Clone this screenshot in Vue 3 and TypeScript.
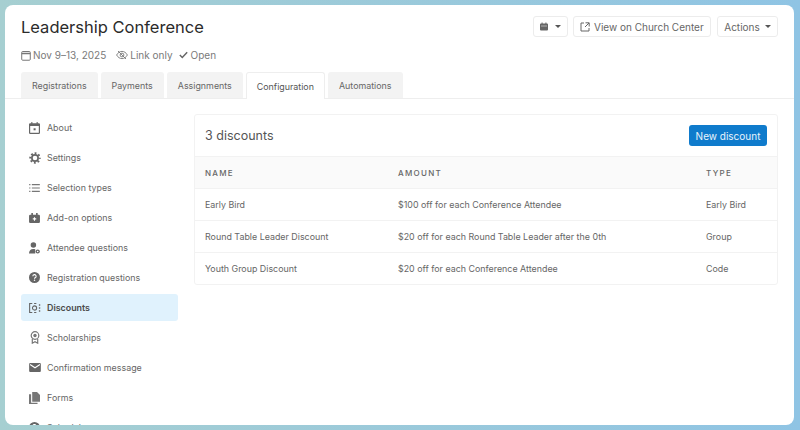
<script setup lang="ts">
interface NavItem {
  label: string
  icon: string
  active?: boolean
}

interface Discount {
  name: string
  amount: string
  type: string
}

const tabs = ['Registrations', 'Payments', 'Assignments', 'Configuration', 'Automations']

const navItems: NavItem[] = [
  { label: 'About', icon: 'about' },
  { label: 'Settings', icon: 'settings' },
  { label: 'Selection types', icon: 'list' },
  { label: 'Add-on options', icon: 'addon' },
  { label: 'Attendee questions', icon: 'attendee' },
  { label: 'Registration questions', icon: 'question' },
  { label: 'Discounts', icon: 'discount', active: true },
  { label: 'Scholarships', icon: 'award' },
  { label: 'Confirmation message', icon: 'mail' },
  { label: 'Forms', icon: 'forms' },
  { label: 'Schedule', icon: 'question' },
]

const discounts: Discount[] = [
  { name: 'Early Bird', amount: '$100 off for each Conference Attendee', type: 'Early Bird' },
  { name: 'Round Table Leader Discount', amount: '$20 off for each Round Table Leader after the 0th', type: 'Group' },
  { name: 'Youth Group Discount', amount: '$20 off for each Conference Attendee', type: 'Code' },
]
</script>

<template>
  <div class="frame">
    <div class="panel">
      <header class="head">
        <div class="head__left">
          <h1 class="title">Leadership Conference</h1>
          <div class="meta">
            <span class="meta__item">
              <svg width="10" height="11" viewBox="0 0 11 12" fill="none" stroke="#777" stroke-width="1.100">
                <rect x="0.800" y="1.600" width="9.400" height="9.600" rx="1" />
                <path d="M0.800 3.800h9.400" stroke-width="1.500" />
              </svg>
              Nov 9–13, 2025
            </span>
            <span class="meta__item meta__item--eye">
              <svg width="12" height="10" viewBox="0 0 12 10" fill="none" stroke="#777" stroke-width="0.900">
                <path d="M0.600 5C2 2.600 3.800 1.400 6 1.400S10 2.600 11.400 5C10 7.400 8.200 8.600 6 8.600S2 7.400 0.600 5Z" />
                <circle cx="6" cy="5" r="1.900" />
                <path d="M2 1l8 8" />
              </svg>
              Link only
            </span>
            <span class="meta__item meta__item--check">
              <svg width="9" height="8" viewBox="0 0 11 9" fill="none" stroke="#666" stroke-width="1.800">
                <path d="M1 4.600l3 3 6-6.400" />
              </svg>
              Open
            </span>
          </div>
        </div>
        <div class="head__actions">
          <button class="btn btn--icon">
            <svg width="8" height="9" viewBox="0 0 10 10" fill="#666">
              <path d="M2 0h1.200v1.200h3.600V0H8v1.200h.8A1.200 1.200 0 0 1 10 2.400v6.400A1.200 1.200 0 0 1 8.800 10H1.200A1.200 1.200 0 0 1 0 8.800V2.400A1.200 1.200 0 0 1 1.200 1.200H2Z" />
              <path d="M1.200 4h7.600v.7H1.200z" fill="#fff" />
            </svg>
            <span class="caret"></span>
          </button>
          <button class="btn btn--wide">
            <svg width="10" height="10" viewBox="0 0 10 10" fill="none" stroke="#666" stroke-width="1">
              <path d="M4 1H1v8h8V6" />
              <path d="M5.500 .8h3.700v3.700M9 1L5 5" />
            </svg>
            View on Church Center
          </button>
          <button class="btn btn--actions">
            Actions
            <span class="caret"></span>
          </button>
        </div>
      </header>

      <nav class="tabs">
        <a v-for="tab in tabs" :key="tab" class="tab" :class="{ 'tab--active': tab === 'Configuration' }">{{ tab }}</a>
      </nav>

      <div class="body">
        <aside class="side">
          <a v-for="item in navItems" :key="item.label" class="side__item" :class="{ 'side__item--active': item.active }">
            <span class="side__icon">
              <svg v-if="item.icon === 'about'" width="11" height="12" viewBox="0 0 12 13" fill="#666">
                <path d="M2.500 0h1.200v1.200h4.600V0h1.200v1.200h1.200A1.300 1.300 0 0 1 12 2.500v9.200a1.300 1.300 0 0 1-1.300 1.300H1.300A1.300 1.300 0 0 1 0 11.700V2.500a1.300 1.300 0 0 1 1.300-1.300h1.200Z" />
                <rect x="1.300" y="4.300" width="9.400" height="7.400" fill="#fff" />
                <rect x="5" y="6.800" width="2.200" height="2.200" />
              </svg>
              <svg v-else-if="item.icon === 'settings'" width="12" height="12" viewBox="0 0 13 13" fill="none" stroke="#666">
                <circle cx="6.500" cy="6.500" r="3.400" stroke-width="1.800" />
                <circle cx="6.500" cy="6.500" r="5.200" stroke-width="2" stroke-dasharray="2 2.080" stroke-dashoffset="1" />
              </svg>
              <svg v-else-if="item.icon === 'list'" width="11" height="8" viewBox="0 0 12 9" fill="#777">
                <path d="M0 0h1.400v1.400H0zM0 3.800h1.400v1.400H0zM0 7.600h1.400V9H0zM3 0h9v1.400H3zM3 3.800h9v1.400H3zM3 7.600h9V9H3z" />
              </svg>
              <svg v-else-if="item.icon === 'addon'" width="11" height="10" viewBox="0 0 12 11" fill="#666">
                <path d="M2.500 0h1.800v2h3.400V0h1.800v2h1.200A1.300 1.300 0 0 1 12 3.300v6.400A1.300 1.300 0 0 1 10.700 11H1.300A1.300 1.300 0 0 1 0 9.700V3.300A1.300 1.300 0 0 1 1.300 2h1.200Z" />
                <path d="M5.400 4.600h1.200v1.300h1.300v1.200H6.600v1.300H5.400V7.100H4.100V5.900h1.300z" fill="#fff" />
              </svg>
              <svg v-else-if="item.icon === 'attendee'" width="11" height="12" viewBox="0 0 12 13" fill="#666">
                <circle cx="4.800" cy="3.300" r="3" />
                <path d="M0 12.500c0-3 1.600-5 4.800-5 .8 0 1.500.1 2 .4v4.600Z" />
                <circle cx="9.500" cy="10.300" r="2.300" />
                <circle cx="9.500" cy="10.300" r=".9" fill="#fff" />
              </svg>
              <svg v-else-if="item.icon === 'question'" width="11" height="11" viewBox="0 0 12 12">
                <circle cx="6" cy="6" r="6" fill="#666" />
                <path d="M4.200 4.700A1.800 1.800 0 1 1 6.700 6.300C6.200 6.600 6 6.800 6 7.300" fill="none" stroke="#fff" stroke-width="1.200" />
                <circle cx="6" cy="9" r=".8" fill="#fff" />
              </svg>
              <svg v-else-if="item.icon === 'discount'" width="12" height="10" viewBox="0 0 13 11" fill="none" stroke="#666" stroke-width="1.200">
                <path d="M3.500 .6H.6v9.800h2.900" />
                <path d="M5.500 .6h2.500M5.500 10.400h2.500" />
                <circle cx="6" cy="5.500" r="2.300" />
                <path d="M11.500 1.500v1.500M11.500 4.800v1.500M11.500 8v1.500" stroke-width="1.500" />
              </svg>
              <svg v-else-if="item.icon === 'award'" width="10" height="13" viewBox="0 0 10 13" fill="none" stroke="#777">
                <circle cx="5" cy="4.500" r="3.800" stroke-width="1.200" />
                <circle cx="5" cy="4.500" r="1.700" fill="#777" stroke="none" />
                <path d="M2.300 8v4.200L5 10.800l2.700 1.400V8" stroke-width="1.200" />
              </svg>
              <svg v-else-if="item.icon === 'mail'" width="12" height="9" viewBox="0 0 13 10" fill="#666">
                <rect width="13" height="10" rx="1.200" />
                <path d="M1 1.700l5.500 3.600L12 1.700" fill="none" stroke="#fff" stroke-width="1.200" />
              </svg>
              <svg v-else width="11" height="12" viewBox="0 0 12 13" fill="#777">
                <path d="M3.500 0h5.200L12 3.300V10.500H3.500Z" />
                <path d="M0 2.500h2.300v9.200h7V13H0Z" />
              </svg>
            </span>
            {{ item.label }}
          </a>
        </aside>

        <section class="card">
          <div class="card__head">
            <h2 class="card__title">3 discounts</h2>
            <button class="primary">New discount</button>
          </div>
          <table class="table">
            <thead>
              <tr>
                <th class="col-name">Name</th>
                <th class="col-amount">Amount</th>
                <th>Type</th>
              </tr>
            </thead>
            <tbody>
              <tr v-for="row in discounts" :key="row.name">
                <td>{{ row.name }}</td>
                <td>{{ row.amount }}</td>
                <td>{{ row.type }}</td>
              </tr>
            </tbody>
          </table>
        </section>
      </div>
    </div>
  </div>
</template>

<style>
html,
body {
  margin: 0;
  background: #9cc9d9;
}
</style>

<style scoped>
* {
  box-sizing: border-box;
}

.frame {
  width: 800px;
  height: 430px;
  padding: 5px 6px 5px 5px;
  background: linear-gradient(90deg, #a6cfd1 0%, #8fc4e4 100%);
  font-family: Inter, 'Liberation Sans', sans-serif;
  color: #444;
}

.panel {
  height: 100%;
  background: #fff;
  border-radius: 8px;
  overflow: hidden;
}

.head {
  display: flex;
  justify-content: space-between;
  align-items: flex-start;
  padding: 11px 16px 0;
  height: 67px;
}

.title {
  margin: 0;
  font-size: 16.5px;
  line-height: 22px;
  font-weight: 400;
  color: #2b2b2b;
}

.meta {
  display: flex;
  gap: 8px;
  margin-top: 10px;
  font-size: 10px;
  line-height: 14px;
  color: #7a7a7a;
}

.meta__item {
  display: flex;
  align-items: center;
  gap: 2px;
}

.meta__item--eye {
  margin-left: 2px;
}

.meta__item--check {
  gap: 3px;
  margin-left: -2px;
}

.head__actions {
  display: flex;
  gap: 5px;
}

.btn {
  display: flex;
  align-items: center;
  gap: 4px;
  height: 21px;
  padding: 0 6px;
  border: 1px solid #ececec;
  border-radius: 3px;
  background: #fff;
  font: inherit;
  font-size: 10px;
  color: #666;
}

.btn--icon {
  width: 35px;
  gap: 7px;
  justify-content: center;
}

.btn--wide {
  width: 138px;
}

.btn--actions {
  width: 61px;
  margin-left: 1px;
  gap: 5px;
  justify-content: center;
}

.caret {
  width: 0;
  height: 0;
  border-left: 3px solid transparent;
  border-right: 3px solid transparent;
  border-top: 3px solid #555;
}

.tabs {
  display: flex;
  gap: 3px;
  padding-left: 16px;
  height: 27px;
  border-bottom: 1px solid #eee;
}

.tab {
  display: flex;
  align-items: center;
  padding: 0 11px;
  height: 26px;
  background: #f3f3f3;
  border-radius: 3px 3px 0 0;
  font-size: 8.9px;
  color: #666;
}

.tab--active {
  height: 27px;
  padding: 0 10px;
  background: #fff;
  border: 1px solid #eee;
  border-bottom: 0;
  color: #555;
}

.body {
  display: flex;
  gap: 16px;
  padding: 15px 16px 0;
}

.side {
  display: flex;
  flex-direction: column;
  gap: 3px;
  flex: 0 0 157px;
}

.side__item {
  display: flex;
  align-items: center;
  flex: 0 0 27px;
  padding-left: 7px;
  border-radius: 3px;
  font-size: 8.9px;
  color: #666;
}

.side__item--active {
  background: #e0f2fd;
  font-weight: 600;
  color: #4a4a4a;
}

.side__icon {
  display: flex;
  justify-content: center;
  align-items: center;
  width: 13px;
  margin-right: 6px;
}

.card {
  flex: 1;
  height: 171px;
  border: 1px solid #f2f2f2;
  border-radius: 3px;
  overflow: hidden;
}

.card__head {
  display: flex;
  justify-content: space-between;
  align-items: center;
  height: 41px;
  padding: 0 10px;
}

.card__title {
  margin: 0;
  font-size: 12.5px;
  font-weight: 400;
  color: #555;
}

.primary {
  width: 78px;
  height: 21px;
  padding: 0;
  border: 0;
  border-radius: 3px;
  background: #0f7bcc;
  font: inherit;
  font-size: 10px;
  color: #e8f4fc;
}

.table {
  width: 100%;
  border-collapse: collapse;
  table-layout: fixed;
  font-size: 8.9px;
}

.table th,
.table td {
  padding: 0 10px;
  text-align: left;
  font-weight: 400;
  border-top: 1px solid #f2f2f2;
}

.table th {
  height: 32px;
  background: #fafafa;
  font-size: 8px;
  font-weight: 500;
  letter-spacing: 0.16em;
  text-transform: uppercase;
  color: #666;
}

.table td {
  height: 32px;
  color: #666;
}

.col-name {
  width: 193px;
}

.col-amount {
  width: 308px;
}
</style>
